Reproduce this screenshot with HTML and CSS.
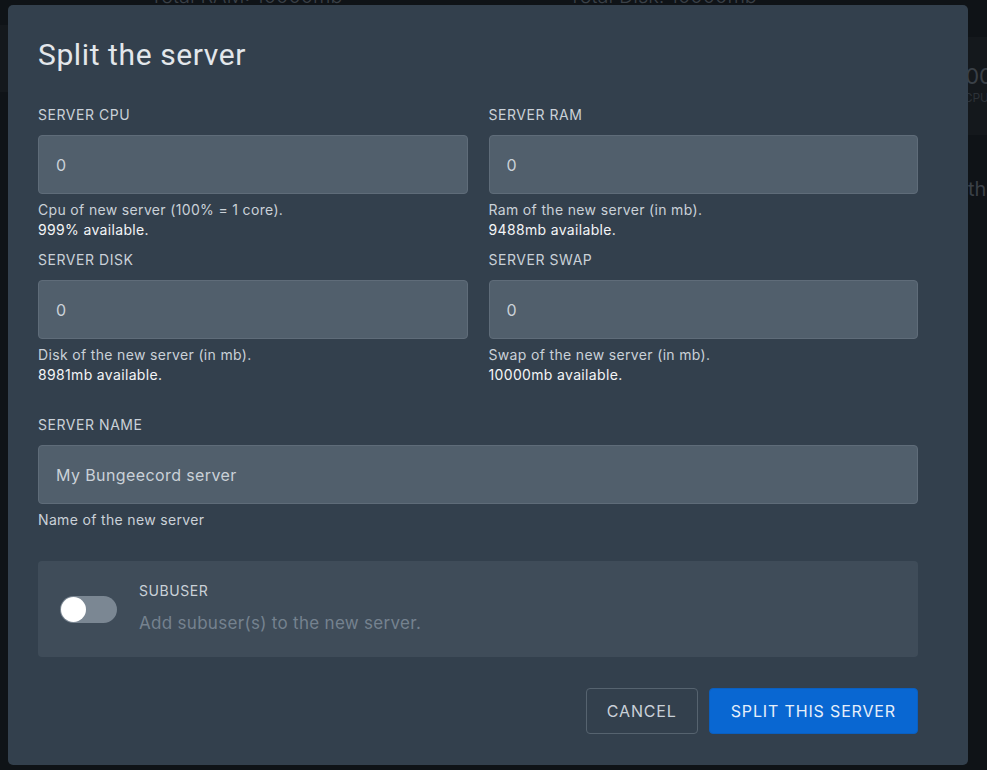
FILE: index.html
```html
<!DOCTYPE html>
<html lang="en">
<head>
<meta charset="utf-8">
<title>Split the server</title>
<link rel="stylesheet" href="styles.css">
</head>
<body>
<div class="page">
  <div class="stats">
    <span class="stat">Total RAM: 10000mb</span>
    <span class="stat">Total Disk: 10000mb</span>
  </div>
  <div class="cards">
    <div class="card card-left"></div>
    <div class="card card-right"><span class="big">1000</span><span class="small">CPU</span></div>
  </div>
  <div class="note">this</div>
</div>

<div class="overlay">
  <div class="modal">
    <h2 class="title">Split the server</h2>
    <div class="grid">
      <div class="field">
        <label class="label">Server CPU</label>
        <div class="input">0</div>
        <p class="help">Cpu of new server (100% = 1 core).<br><span class="avail">999% available.</span></p>
      </div>
      <div class="field">
        <label class="label">Server RAM</label>
        <div class="input">0</div>
        <p class="help">Ram of the new server (in mb).<br><span class="avail">9488mb available.</span></p>
      </div>
      <div class="field">
        <label class="label">Server Disk</label>
        <div class="input">0</div>
        <p class="help">Disk of the new server (in mb).<br><span class="avail">8981mb available.</span></p>
      </div>
      <div class="field">
        <label class="label">Server Swap</label>
        <div class="input">0</div>
        <p class="help">Swap of the new server (in mb).<br><span class="avail">10000mb available.</span></p>
      </div>
    </div>
    <div class="field name-field">
      <label class="label">Server Name</label>
      <div class="input">My Bungeecord server</div>
      <p class="help">Name of the new server</p>
    </div>
    <div class="subuser">
      <div class="toggle"><span class="knob"></span></div>
      <div class="subuser-text">
        <div class="label">Subuser</div>
        <div class="sub-desc">Add subuser(s) to the new server.</div>
      </div>
    </div>
    <div class="actions">
      <button class="btn btn-cancel">Cancel</button>
      <button class="btn btn-primary">Split this server</button>
    </div>
  </div>
</div>
</body>
</html>
```

FILE: styles.css
```css
* { box-sizing: border-box; }
html, body { margin: 0; padding: 0; }
body {
  background: #0f1317;
  font-family: Inter, "Noto Sans", sans-serif;
  width: 987px;
  height: 770px;
  overflow: hidden;
}
.page {
  height: 770px;
  color: #3a4047;
  overflow: hidden;
}
.stats {
  display: flex;
  align-items: flex-start;
  padding-left: 150px;
  height: 25px;
  font-size: 20px;
  line-height: 24px;
  font-weight: 300;
}
.stat {
  width: 443px;
  margin-top: -16px;
  white-space: nowrap;
}
.cards {
  display: flex;
  justify-content: space-between;
  height: 110px;
}
.card { background: #14181c; }
.card-left { width: 8px; height: 67px; }
.card-right {
  width: 19px;
  height: 98px;
  margin-top: 12px;
  padding-top: 26px;
  display: flex;
  flex-direction: column;
  overflow: hidden;
  white-space: nowrap;
  direction: rtl;
}
.big { font-size: 22px; line-height: 26px; margin-right: -6px; }
.small { font-size: 12px; line-height: 18px; margin-right: -2px; color: #2c3238; }
.note {
  margin: 42px 0 0 968px;
  font-size: 20px;
  line-height: 24px;
  white-space: nowrap;
}

.overlay {
  position: fixed;
  inset: 0;
  padding: 5px 19px 5px 8px;
}
.modal {
  width: 960px;
  height: 760px;
  background: #33404d;
  border-radius: 5px;
  padding: 32px 50px 31px 30px;
  display: flex;
  flex-direction: column;
}
.title {
  margin: 0;
  font-family: Roboto, "Noto Sans", sans-serif;
  font-weight: 400;
  font-size: 30px;
  line-height: 36px;
  color: #e3e7eb;
  letter-spacing: 0.6px;
}
.grid {
  margin-top: 32px;
  display: grid;
  grid-template-columns: 1fr 1fr;
  column-gap: 21px;
  row-gap: 10px;
}
.field { display: flex; flex-direction: column; }
.label {
  font-size: 14px;
  line-height: 20px;
  color: #cad1d8;
  text-transform: uppercase;
  letter-spacing: 0.55px;
}
.field .label { margin-bottom: 10px; }
.input {
  height: 59px;
  background: #515f6c;
  border: 1px solid #5f6c79;
  border-radius: 4px;
  padding: 0 17px;
  display: flex;
  align-items: center;
  font-size: 16px;
  letter-spacing: 0.4px;
  color: #cad1d8;
}
.help {
  margin: 6px 0 0;
  font-size: 14px;
  line-height: 20px;
  letter-spacing: 0.34px;
  color: #cad1d8;
}
.avail { color: #f3f5f7; }
.name-field { margin-top: 30px; }
.subuser {
  margin-top: 31px;
  height: 96px;
  background: #3f4c59;
  border-radius: 4px;
  display: flex;
  align-items: center;
  padding-left: 22px;
  gap: 22px;
}
.toggle {
  width: 57px;
  height: 27px;
  border-radius: 14px;
  background: #7b8793;
  padding: 1px;
  display: flex;
}
.knob {
  width: 25px;
  height: 25px;
  border-radius: 50%;
  background: #ffffff;
}
.subuser-text { display: flex; flex-direction: column; gap: 11px; margin-top: -4px; }
.sub-desc { font-size: 17px; line-height: 22px; letter-spacing: 0.3px; color: #75828f; }
.actions {
  margin-top: auto;
  display: flex;
  justify-content: flex-end;
  gap: 11px;
}
.btn {
  height: 46px;
  font-family: Inter, "Noto Sans", sans-serif;
  font-size: 16px;
  text-transform: uppercase;
  letter-spacing: 0.85px;
  border-radius: 4px;
  padding: 0 21px;
  cursor: pointer;
}
.btn-cancel {
  background: transparent;
  border: 1px solid #56636f;
  color: #cad1d8;
  padding: 0 20px;
}
.btn-primary {
  background: #0967d2;
  border: 1px solid #0a5fc0;
  color: #e6effa;
}
```
